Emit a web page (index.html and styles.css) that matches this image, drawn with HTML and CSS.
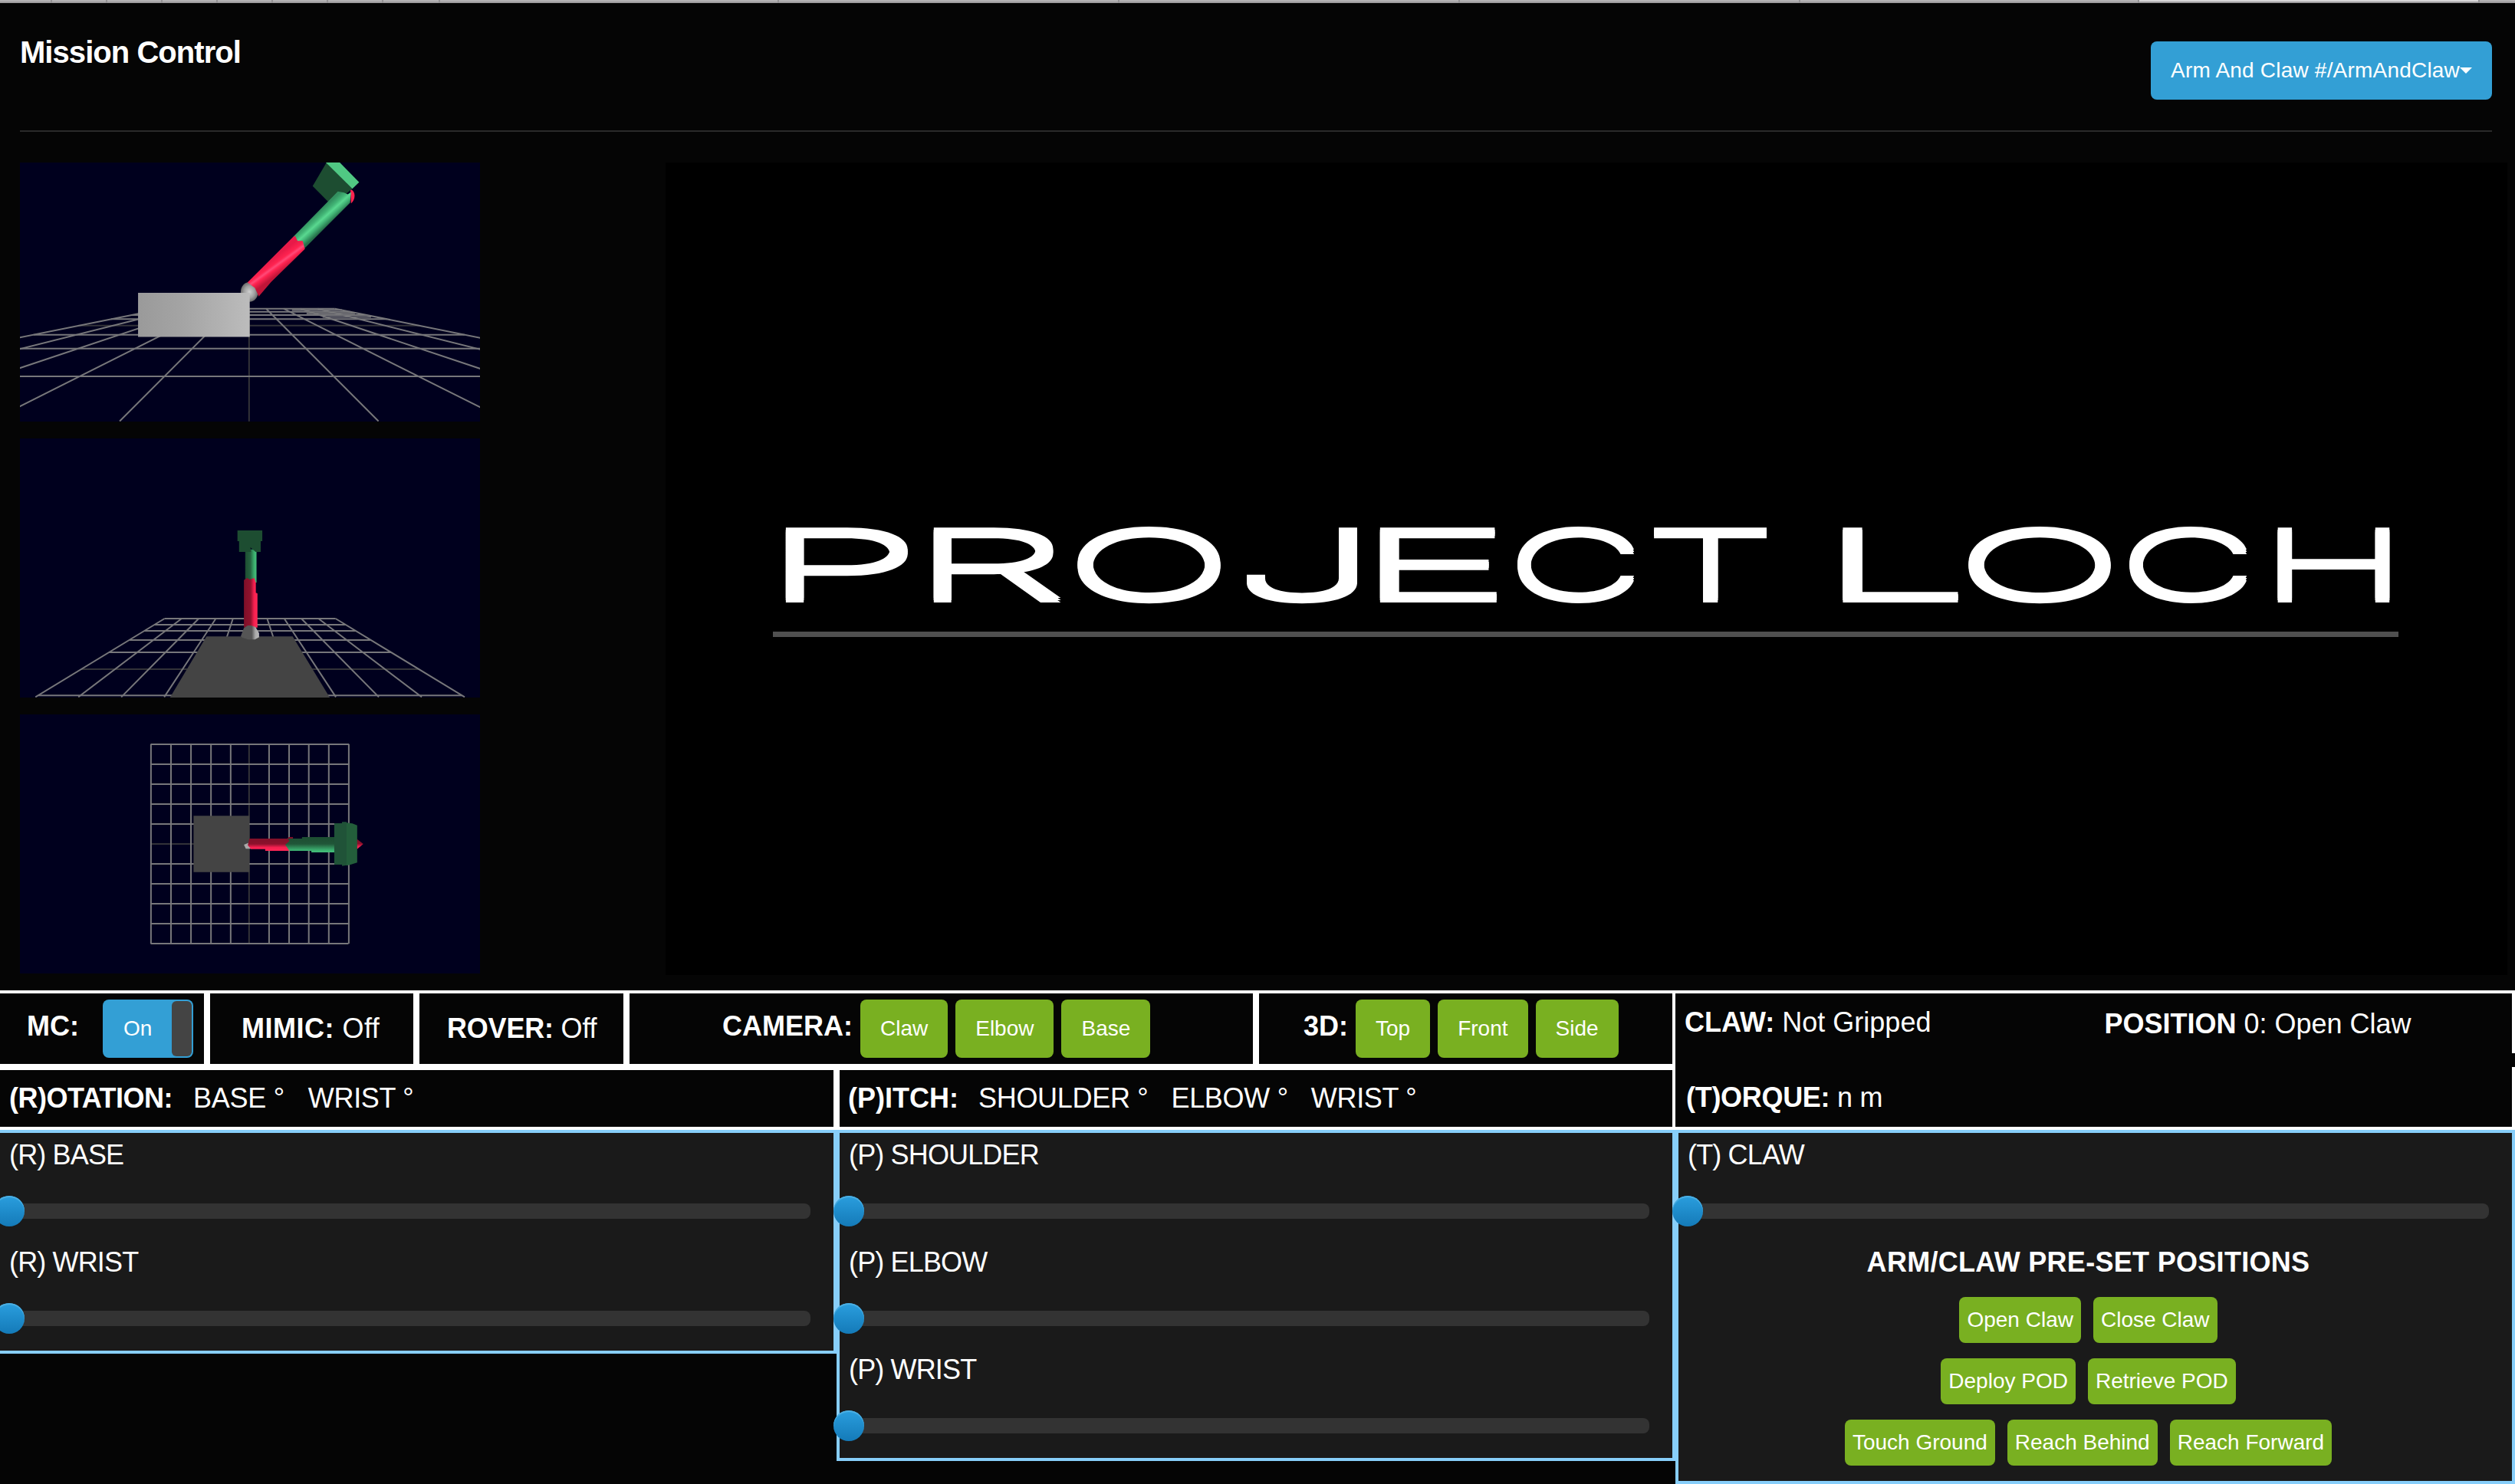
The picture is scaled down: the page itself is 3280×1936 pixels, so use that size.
FILE: index.html
```html
<!DOCTYPE html>
<html lang="en">
<head>
<meta charset="utf-8">
<title>Mission Control</title>
<link rel="stylesheet" href="styles.css">
</head>
<body>
<svg class="tabstrip" viewBox="0 0 3280 4">
  <path fill="#b5b3b5" d="M0 0H3280V2H0Z"/>
  <path fill="#d8d7d8" d="M2790 0H3232V2H2790Z"/>
  <path fill="#9f9d9f" d="M0 2H3280V4H0Z"/>
  <path stroke="#949294" stroke-width="2" d="M67 0V4M139 0V4M211 0V4M283 0V4M355 0V4M427 0V4M499 0V4M573 0V4M1015 0V4M1459 0V4M1903 0V4M2347 0V4M2789 0V4M3233 0V4"/>
</svg>
<header class="header">
  <h1 class="title">Mission Control</h1>
  <button class="nav-button">Arm And Claw #/ArmAndClaw<i class="caret"></i></button>
</header>

<main class="stage">
  <div class="views">
    <svg class="view" viewBox="62 594 1425.5 946.4" preserveAspectRatio="none">
      <defs>
        <linearGradient id="boxSide" x1="0" y1="0" x2="1" y2="0"><stop offset="0" stop-color="#9a9a9a"/><stop offset=".4" stop-color="#a4a4a4"/><stop offset="1" stop-color="#bcbcbc"/></linearGradient>
        <linearGradient id="redTube" gradientUnits="userSpaceOnUse" x1="840" y1="948" x2="876" y2="990"><stop offset="0" stop-color="#e81a48"/><stop offset=".35" stop-color="#ff2350"/><stop offset=".5" stop-color="#ff4a78"/><stop offset=".65" stop-color="#ff2350"/><stop offset="1" stop-color="#c01538"/></linearGradient>
        <linearGradient id="greenTube" gradientUnits="userSpaceOnUse" x1="977" y1="785" x2="1016" y2="822"><stop offset="0" stop-color="#339060"/><stop offset=".3" stop-color="#42b576"/><stop offset=".5" stop-color="#5ad890"/><stop offset=".7" stop-color="#42b576"/><stop offset="1" stop-color="#26704a"/></linearGradient>
        <radialGradient id="ball"><stop offset="0" stop-color="#d0d0d0"/><stop offset=".6" stop-color="#a0a0a0"/><stop offset="1" stop-color="#6a6a6a"/></radialGradient>
      </defs>
      <path class="axis" d="M772 1128V1540M243 1190H1301"/>
      <path class="grid" d="M506 1128H1038M459 1139H1085M408 1151H1136M345 1166H1199M104 1223H1440M62 1274H1488M62 1375H1488"/>
      <path class="grid" d="M825 1128L1173 1539M879 1128L1574 1539M932 1128L1975 1539M985 1128L2376 1539M1038 1128L2777 1539M719 1128L371 1539M665 1128L-30 1539M612 1128L-431 1539M559 1128L-832 1539M506 1128L-1233 1539"/>
      <path class="grid" d="M905 1133H1060M950 1145H1100M1000 1158H1150"/>
      <ellipse cx="773" cy="1067" rx="27" ry="36" fill="url(#ball)"/>
      <path fill="url(#boxSide)" d="M428 1070H774V1231H428Z"/>
      <path fill="#ff2350" d="M1086 692Q1098 696 1099 714Q1099 732 1088 744Z"/>
      <path fill="#1d4d31" d="M1012 594L969 680L1016 736L1060 720L1092 690Z"/>
      <path fill="#50c883" d="M1010 594H1053L1113 666L1092 690Z"/>
      <path fill="url(#greenTube)" d="M1047 700L908 866L943 908L1085 741L1088 702L1078 710L1066 704Z"/>
      <path fill="url(#redTube)" d="M767 1032L908 866L915 862L922 880L938 880L945 910L840 1031L802 1083L790 1052Z"/>
    </svg>
    <svg class="view" viewBox="62 36 1425.5 1014" preserveAspectRatio="none">
      <defs>
        <linearGradient id="redPost"><stop offset="0" stop-color="#7e0f28"/><stop offset=".5" stop-color="#92122e"/><stop offset=".75" stop-color="#f52050"/><stop offset="1" stop-color="#ff2856"/></linearGradient>
        <linearGradient id="greenPost"><stop offset="0" stop-color="#1d4d31"/><stop offset=".45" stop-color="#256340"/><stop offset=".8" stop-color="#3cb070"/><stop offset="1" stop-color="#45c07b"/></linearGradient>
        <linearGradient id="cone"><stop offset="0" stop-color="#555"/><stop offset=".6" stop-color="#555"/><stop offset=".8" stop-color="#aaa"/><stop offset="1" stop-color="#bbb"/></linearGradient>
      </defs>
      <path class="axis" d="M252 939H1298"/>
      <path class="grid" d="M510 741H1040M479 765H1071M447 789H1103M401 825H1149M338 873H1212M118 1042H1432"/>
      <path class="grid" d="M828 741L908 1048M881 741L1041 1048M934 741L1174 1048M987 741L1307 1048M1040 741L1440 1048M722 741L642 1048M669 741L509 1048M616 741L376 1048M563 741L243 1048M510 741L110 1048"/>
      <path fill="#444" d="M640 811H907L1022 1050H527Z"/>
      <path fill="url(#greenPost)" d="M760 470H795V600H760Z"/>
      <path fill="#1d4d31" d="M736 396H813V438H808V480H792L776 462L778 480H741V438H736Z"/>
      <path fill="url(#redPost)" d="M756 590L766 582L774 588L788 582L793 600V640L798 643V776H756Z"/>
      <path fill="url(#cone)" d="M746 811L756 778L768 768H778L792 774L803 798V814L790 823H770L752 816Z"/>
    </svg>
    <svg class="view" viewBox="62 36 1425.5 1014" preserveAspectRatio="none">
      <defs>
        <linearGradient id="redArm" x1="0" y1="0" x2="0" y2="1"><stop offset="0" stop-color="#7e0f28"/><stop offset=".5" stop-color="#8c112c"/><stop offset=".75" stop-color="#f52050"/><stop offset="1" stop-color="#ff2856"/></linearGradient>
        <linearGradient id="greenArm" x1="0" y1="0" x2="0" y2="1"><stop offset="0" stop-color="#1d4d31"/><stop offset=".45" stop-color="#205638"/><stop offset=".85" stop-color="#3cb070"/><stop offset="1" stop-color="#45c07b"/></linearGradient>
      </defs>
      <path class="axis" d="M772 153V933M468 543H1080"/>
      <path class="grid" d="M468 153V933M530 153V933M592 153V933M654 153V933M715 153V933M834 153V933M896 153V933M957 153V933M1019 153V933M1081 153V933"/>
      <path class="grid" d="M467 153H1082M467 231H1082M467 309H1082M467 387H1082M467 465H1082M467 621H1082M467 699H1082M467 777H1082M467 855H1082M467 933H1080"/>
      <path fill="#444" d="M600 433H773V653H600Z"/>
      <path fill="#aaa" d="M756 546L775 536L780 562H762Z"/>
      <path fill="url(#redArm)" d="M773 522H890L896 516H908V570H822V563H778L768 548Z"/>
      <path fill="url(#greenArm)" d="M892 522H936V516H1040V576H965V570H897L884 546L897 532Z"/>
      <path fill="url(#redArm)" d="M1102 520L1126 543L1106 564Z"/>
      <path fill="#205338" d="M1036 462H1060V457H1074V462H1075V626L1060 629V624H1036Z"/>
      <path fill="#235e3b" d="M1074 460L1092 463L1107 470V616L1092 622L1074 628Z"/>
    </svg>
  </div>
  <div class="video">
    <svg class="logo" viewBox="868 212 2402 1060">
      <text class="wordmark" y="783"><tspan x="992.5" textLength="211.3" lengthAdjust="spacingAndGlyphs">P</tspan><tspan x="1186.1" textLength="209.1" lengthAdjust="spacingAndGlyphs">R</tspan><tspan x="1386.6" textLength="223.9" lengthAdjust="spacingAndGlyphs">O</tspan><tspan x="1605.8" textLength="195.7" lengthAdjust="spacingAndGlyphs">J</tspan><tspan x="1766" textLength="209.5" lengthAdjust="spacingAndGlyphs">E</tspan><tspan x="1963.3" textLength="182.8" lengthAdjust="spacingAndGlyphs">C</tspan><tspan x="2142.5" textLength="176.1" lengthAdjust="spacingAndGlyphs">T</tspan> <tspan x="2368.7" textLength="203.9" lengthAdjust="spacingAndGlyphs">L</tspan><tspan x="2548.7" textLength="222.7" lengthAdjust="spacingAndGlyphs">O</tspan><tspan x="2761.2" textLength="184" lengthAdjust="spacingAndGlyphs">C</tspan><tspan x="2945.1" textLength="196.7" lengthAdjust="spacingAndGlyphs">H</tspan></text>
      <path class="underline" d="M1008 827.5H3128"/>
    </svg>
  </div>
</main>

<section class="status">
  <div class="status-left">
    <div class="row row-top">
      <div class="cell cell-mc"><b class="raised">MC:</b><span class="toggle">On<i class="toggle-handle"></i></span></div>
      <div class="cell cell-mimic"><b>MIMIC:</b> Off</div>
      <div class="cell cell-rover"><b>ROVER:</b> Off</div>
      <div class="cell cell-camera"><b class="raised">CAMERA:</b><button class="btn">Claw</button><button class="btn">Elbow</button><button class="btn">Base</button></div>
      <div class="cell cell-3d"><b class="raised">3D:</b><button class="btn">Top</button><button class="btn">Front</button><button class="btn">Side</button></div>
    </div>
    <div class="row row-bottom">
      <div class="cell cell-rotation"><b>(R)OTATION:</b><span>BASE °</span><span>WRIST °</span></div>
      <div class="cell cell-pitch"><b>(P)ITCH:</b><span>SHOULDER °</span><span>ELBOW °</span><span>WRIST °</span></div>
    </div>
  </div>
  <div class="status-right">
    <div class="claw-row"><span><b>CLAW:</b> Not Gripped</span><span class="position"><b>POSITION</b> 0: Open Claw</span></div>
    <div class="torque-row"><b>(T)ORQUE:</b> n m</div>
  </div>
</section>

<section class="panels">
  <div class="panel panel-rotation">
    <div class="slider"><label>(R) BASE</label><div class="track"><i class="thumb"></i></div></div>
    <div class="slider"><label>(R) WRIST</label><div class="track"><i class="thumb"></i></div></div>
  </div>
  <div class="panel panel-pitch">
    <div class="slider"><label>(P) SHOULDER</label><div class="track"><i class="thumb"></i></div></div>
    <div class="slider"><label>(P) ELBOW</label><div class="track"><i class="thumb"></i></div></div>
    <div class="slider"><label>(P) WRIST</label><div class="track"><i class="thumb"></i></div></div>
  </div>
  <div class="panel panel-claw">
    <div class="slider"><label>(T) CLAW</label><div class="track"><i class="thumb"></i></div></div>
    <h2 class="presets-title">ARM/CLAW PRE-SET POSITIONS</h2>
    <div class="presets">
      <div class="preset-row"><button class="btn small">Open Claw</button><button class="btn small">Close Claw</button></div>
      <div class="preset-row"><button class="btn small">Deploy POD</button><button class="btn small">Retrieve POD</button></div>
      <div class="preset-row"><button class="btn small">Touch Ground</button><button class="btn small">Reach Behind</button><button class="btn small">Reach Forward</button></div>
    </div>
  </div>
</section>
</body>
</html>
```
FILE: styles.css
```css
* { box-sizing: border-box; }

body {
  margin: 0;
  width: 3280px;
  height: 1936px;
  overflow: hidden;
  background: #050505;
  color: #fff;
  font-family: "Liberation Sans", Arial, sans-serif;
  font-size: 36px;
}

button { font: inherit; color: inherit; border: 0; margin: 0; }

.tabstrip { display: block; width: 3280px; height: 4px; }

.header {
  display: flex;
  justify-content: space-between;
  align-items: flex-start;
  height: 168px;
  margin: 0 30px 40px 26px;
  border-bottom: 2px solid #2a2a2a;
}

.title { margin: 40px 0 0; font-size: 40px; line-height: 48px; letter-spacing: -0.95px; }

.nav-button {
  display: flex;
  align-items: center;
  height: 76px;
  margin-top: 50px;
  padding: 0 26px;
  border-radius: 8px;
  background: #339fd5;
  font-size: 28px;
  letter-spacing: 0.2px;
}

.caret {
  border: 8px solid transparent;
  border-top-color: #fff;
  border-bottom: 0;
}

.stage {
  display: flex;
  gap: 242px;
  height: 1080px;
  padding-left: 26px;
}

.views { display: flex; flex-direction: column; gap: 22px; }

.view {
  display: block;
  width: 600px;
  height: 338px;
  background: #00001e;
}

.grid, .axis { fill: none; stroke: #77777a; stroke-width: 2; vector-effect: non-scaling-stroke; }
.axis { stroke: #333338; }

.video { width: 2402px; height: 1060px; background: #000; }
.logo { display: block; }

.wordmark {
  fill: #fff;
  font-family: Inter, sans-serif;
  font-size: 126px;
  font-weight: 300;
  filter: drop-shadow(0 3px 0 #fff) drop-shadow(0 -3px 0 #fff);
}

.underline { stroke: #505050; stroke-width: 7; }

.status {
  display: flex;
  height: 182px;
  border-top: 4px solid #fff;
  border-bottom: 4px solid #fff;
}

.status-left { width: 2181px; }
.row { display: flex; }
.row-top { height: 100px; border-bottom: 8px solid #fff; }
.row-bottom { height: 74px; letter-spacing: -0.3px; }

.cell { display: flex; align-items: center; white-space: pre; border-right: 8px solid #fff; }
.cell:last-child { border-right: 0; }
.raised { position: relative; top: -3px; }

.cell-mc { width: 274px; padding-left: 35px; gap: 31px; }
.cell-mimic { width: 273px; padding-left: 41px; letter-spacing: 0.5px; }
.cell-rover { width: 274px; padding-left: 36px; letter-spacing: -0.2px; }
.cell-camera { width: 821px; padding-left: 121px; gap: 10px; }
.cell-3d { width: 539px; padding-left: 58px; gap: 10px; }
.cell-rotation { width: 1095px; padding-left: 12px; gap: 31px; }
.cell-rotation b { margin-right: -4px; letter-spacing: -0.5px; }
.cell-pitch { width: 1086px; padding-left: 11px; gap: 30px; }
.cell-pitch b { margin-right: -4px; letter-spacing: 0; }

.toggle {
  display: flex;
  align-items: center;
  justify-content: space-between;
  width: 118px;
  height: 76px;
  padding: 2px 2px 2px 27px;
  border-radius: 8px;
  background: #339fd5;
  font-size: 28px;
}

.toggle-handle { width: 26px; height: 72px; border-radius: 6px; background: #444; }

.btn {
  height: 76px;
  padding: 0 26px;
  border-radius: 8px;
  background: #79b021;
  font-size: 28px;
  white-space: nowrap;
}

.btn.small { height: 60px; padding: 0 10px; }

.status-right {
  display: flex;
  flex-direction: column;
  justify-content: space-between;
  width: 1099px;
  border-left: 4px solid #fff;
}

.claw-row, .torque-row { height: 78px; border-right: 4px solid #fff; line-height: 40px; }
.claw-row { display: flex; padding: 18px 0 0 12px; }
.position { margin: 2px 0 0 226px; }
.torque-row { padding: 20px 0 0 14px; letter-spacing: -0.3px; }

.panels {
  display: grid;
  grid-template-columns: 1091px 1094px 1095px;
  align-items: start;
}

.panel { border: 4px solid #87cefa; padding-bottom: 4px; background: #1a1a1a; }
.panel-rotation { border-left: 0; }
.panel-claw { padding-bottom: 20px; }

.slider { height: 140px; padding-right: 30px; }
.slider label { display: block; height: 92px; padding-left: 12px; line-height: 58px; letter-spacing: -0.85px; }
.track { position: relative; height: 20px; border-radius: 0 8px 8px 0; background: #333; }

.thumb {
  position: absolute;
  left: -8px;
  top: -10px;
  width: 40px;
  height: 40px;
  border-radius: 50%;
  background: linear-gradient(#2a9ede, #147ab8);
  box-shadow: inset 0 2px 1px #4db0e4;
}

.presets-title { margin: 0 18px 16px 0; font-size: 36px; line-height: 58px; text-align: center; letter-spacing: 0.3px; }
.presets { display: flex; flex-direction: column; gap: 20px; padding-right: 18px; }
.preset-row { display: flex; justify-content: center; gap: 16px; }
```
